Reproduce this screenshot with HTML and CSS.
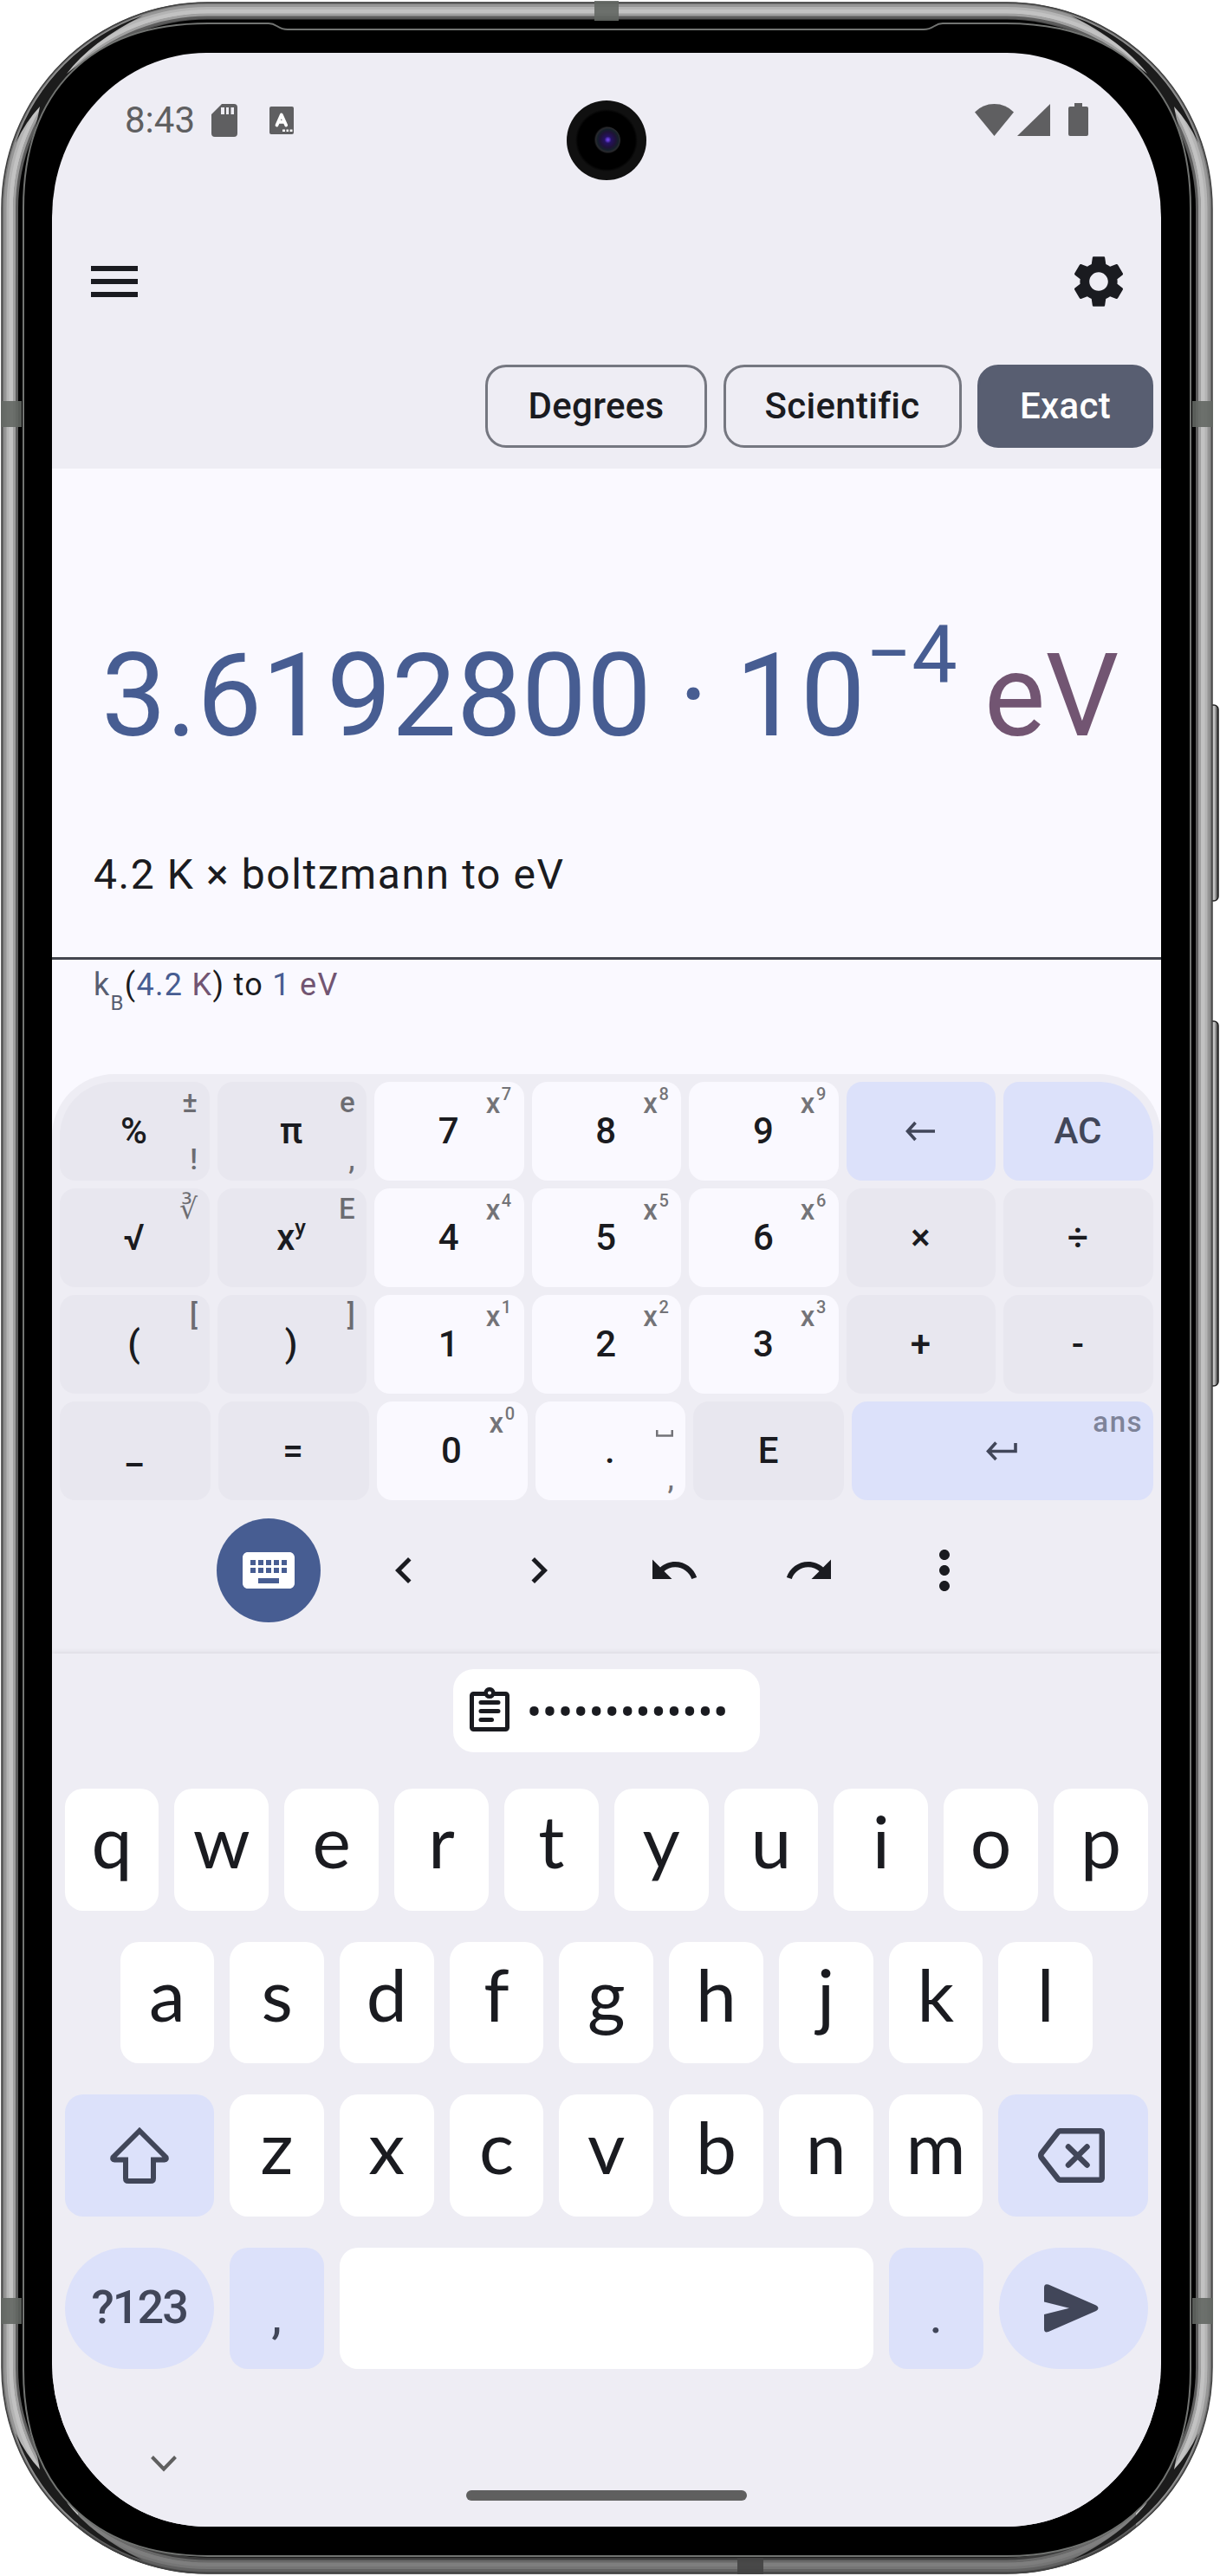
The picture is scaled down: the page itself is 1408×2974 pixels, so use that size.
FILE: index.html
```html
<!DOCTYPE html>
<html lang="en">
<head>
<meta charset="utf-8">
<title>Calculator</title>
<link rel="stylesheet" href="styles.css">
</head>
<body>
<div class="phone">
  <svg class="frame" viewBox="0 0 1408 2974" aria-hidden="true">
    <defs>
      <linearGradient id="btn" x1="0" x2="1" y1="0" y2="0">
        <stop offset="0" stop-color="#444"/><stop offset=".35" stop-color="#ddd"/><stop offset=".65" stop-color="#bbb"/><stop offset="1" stop-color="#222"/>
      </linearGradient>
      <clipPath id="body"><rect x="2" y="2.500" width="1397" height="2969" rx="238"/></clipPath>
    </defs>
    <g fill="url(#btn)" stroke="#222" stroke-width="1.5">
      <rect x="1394" y="814" width="12" height="226" rx="5"/>
      <rect x="1394" y="1179" width="12" height="421" rx="5"/>
    </g>
    <rect x="2" y="2.500" width="1397" height="2969" rx="238" fill="#4a4a4a"/>
    <g fill="none">
      <rect x="4" y="4.500" width="1393" height="2965" rx="236" stroke="#777" stroke-width="3"/>
      <rect x="6.500" y="7" width="1388" height="2960" rx="233" stroke="#969696" stroke-width="4"/>
      <rect x="9.500" y="10" width="1382" height="2954" rx="230" stroke="#b4b4b4" stroke-width="4"/>
      <rect x="13" y="13.500" width="1375" height="2947" rx="227" stroke="#c2c2c2" stroke-width="5"/>
      <rect x="17" y="17.500" width="1367" height="2939" rx="223" stroke="#a0a0a0" stroke-width="4"/>
      <rect x="19.500" y="20" width="1362" height="2934" rx="220" stroke="#5c5c5c" stroke-width="3"/>
    </g>
    <path d="M90 2880H1311V2971H90Z" opacity=".35" clip-path="url(#body)"/>
    <rect x="21" y="22.500" width="1359" height="2930" rx="219" fill="#000"/>
    <!-- shaded corners of the metal band -->
    <g fill="#1c1c1c">
      <path id="corner" d="M18 165A236 236 0 0 1 165 18Q105 48 77 85Q110 58 160 38A216 216 0 0 0 38 160Q44 135 46 123Q30 140 18 165Z"/>
      <use href="#corner" transform="matrix(-1 0 0 1 1401 0)"/>
      <use href="#corner" transform="matrix(1 0 0 -1 0 2974)"/>
      <use href="#corner" transform="matrix(-1 0 0 -1 1401 2974)"/>
    </g>
    <rect x="2" y="3" width="1397" height="2968" rx="238" fill="none" stroke="#404040" stroke-width="1.500"/>
    <path d="M27 240C27 105 105 27 240 27H310C320 27 320 34 332 34H1066C1078 34 1078 27 1088 27H1161C1296 27 1374 105 1374 240V2736C1374 2870 1296 2950 1161 2951H240C105 2950 27 2870 27 2736Z" fill="#000" stroke="#727472" stroke-width="2"/>
    <g fill="#636763" opacity=".9">
      <path d="M686 1H714V24H686ZM1 463H25V493H1ZM1376 463H1400V493H1376ZM1 2653H25V2683H1ZM1376 2653H1400V2683H1376Z"/>
      <path d="M851 2953H881V2972H851Z" fill="#434343"/>
    </g>
  </svg>

  <main class="screen">
    <div class="camera"><i class="lens"></i></div>

    <header class="status">
      <div class="status-left">
        <span>8:43</span>
        <svg class="sd" viewBox="0 0 30 38"><path fill-rule="evenodd" d="M12 0H26Q30 0 30 4V34Q30 38 26 38H4Q0 38 0 34V12ZM11 4V12H15V4ZM17 4V12H20V4ZM22.500 4V12H26V4Z" fill="currentColor"/></svg>
        <svg class="lang" viewBox="0 0 28 32"><rect width="28" height="32" rx="2" fill="currentColor"/><path d="M8.500 21.500L13.800 9.500L19.200 21.500M10.500 17.800H17" fill="none" stroke="#fff" stroke-width="3.800" stroke-linecap="round" stroke-linejoin="round"/><path d="M15 26.500H18V29H15ZM19.500 26.500H22V29H19.500ZM23.500 26.500H26.500V29H23.500Z" fill="#fff"/></svg>
      </div>
      <svg class="signals" viewBox="0 0 132 38" fill="currentColor"><path d="M0 10.500Q9 1 22.500 1T45 10.500L22.500 38Z"/><path d="M49 38L87 1V38Z"/><path d="M115 0H124V4H129Q131 4 131 6V36Q131 38 129 38H110Q108 38 108 36V6Q108 4 110 4H115Z"/></svg>
    </header>

    <nav class="appbar">
      <svg class="ic72" viewBox="0 0 24 24"><path d="M3 18h18v-2H3v2zm0-5h18v-2H3v2zm0-7v2h18V6H3z" fill="currentColor"/></svg>
      <svg class="ic72" viewBox="0 0 24 24"><path d="M19.140 12.940c.04-.3.06-.61.06-.94 0-.32-.02-.64-.07-.94l2.030-1.580c.18-.14.23-.41.12-.61l-1.920-3.320c-.12-.22-.37-.29-.59-.22l-2.390.96c-.5-.38-1.030-.7-1.620-.94l-.36-2.540c-.04-.24-.24-.41-.48-.41h-3.840c-.24 0-.43.17-.47.41l-.36 2.540c-.59.24-1.130.57-1.620.94l-2.390-.96c-.22-.08-.47 0-.59.22L2.740 8.870c-.12.21-.08.47.12.61l2.030 1.580c-.05.3-.09.63-.09.94s.02.64.07.94l-2.030 1.580c-.18.14-.23.41-.12.61l1.920 3.320c.12.22.37.29.59.22l2.390-.96c.5.38 1.030.7 1.620.94l.36 2.540c.05.24.24.41.48.41h3.840c.24 0 .44-.17.47-.41l.36-2.540c.59-.24 1.130-.56 1.620-.94l2.390.96c.22.08.47 0 .59-.22l1.920-3.320c.12-.22.07-.47-.12-.61l-2.010-1.580zM12 15.600c-1.980 0-3.600-1.620-3.600-3.600s1.620-3.600 3.600-3.600 3.600 1.620 3.600 3.600-1.620 3.600-3.600 3.600z" fill="currentColor"/></svg>
    </nav>

    <div class="chips">
      <button class="chip degrees">Degrees</button>
      <button class="chip scientific">Scientific</button>
      <button class="chip exact">Exact</button>
    </div>

    <section class="display">
      <div class="result">3.6192800 · 10<sup>−4</sup> <span class="unit">eV</span></div>
      <div class="expression">4.2 K × boltzmann to eV</div>
      <div class="parsed"><span class="const">k<sub>B</sub></span>(<span class="num">4.2</span> <span class="unit">K</span>) to <span class="num">1</span> <span class="unit">eV</span></div>
    </section>

    <section class="keypad">
      <div class="krow">
        <div class="key op tl">%<span class="hint">±</span><span class="hint low">!</span></div>
        <div class="key op">π<span class="hint">e</span><span class="hint low">,</span></div>
        <div class="key">7<span class="hint pw">x<sup>7</sup></span></div>
        <div class="key">8<span class="hint pw">x<sup>8</sup></span></div>
        <div class="key">9<span class="hint pw">x<sup>9</sup></span></div>
        <div class="key act"><svg class="arrow" viewBox="0 0 36 24"><path d="M35 12H4M12.500 2L3.500 12L12.500 22" /></svg></div>
        <div class="key act tr">AC</div>
      </div>
      <div class="krow">
        <div class="key op">√<span class="hint root">∛</span></div>
        <div class="key op"><span class="pow">x<sup>y</sup></span><span class="hint">E</span></div>
        <div class="key">4<span class="hint pw">x<sup>4</sup></span></div>
        <div class="key">5<span class="hint pw">x<sup>5</sup></span></div>
        <div class="key">6<span class="hint pw">x<sup>6</sup></span></div>
        <div class="key op">×</div>
        <div class="key op">÷</div>
      </div>
      <div class="krow">
        <div class="key op">(<span class="hint">[</span></div>
        <div class="key op">)<span class="hint">]</span></div>
        <div class="key">1<span class="hint pw">x<sup>1</sup></span></div>
        <div class="key">2<span class="hint pw">x<sup>2</sup></span></div>
        <div class="key">3<span class="hint pw">x<sup>3</sup></span></div>
        <div class="key op">+</div>
        <div class="key op">-</div>
      </div>
      <div class="krow last">
        <div class="key op">_</div>
        <div class="key op">=</div>
        <div class="key">0<span class="hint pw">x<sup>0</sup></span></div>
        <div class="key">.<svg class="space" viewBox="0 0 20 8"><path d="M1.250 0V6.500H18.750V0" fill="none" stroke="currentColor" stroke-width="2.500"/></svg><span class="hint low">,</span></div>
        <div class="key op">E</div>
        <div class="key act"><svg class="arrow" viewBox="0 0 36 24"><path d="M34 3V12.500H3M11.500 2.500L2.500 12.500L11.500 22" /></svg><span class="hint ans">ans</span></div>
      </div>
      <div class="tools">
        <span class="tool kb"><svg class="ic72" viewBox="0 0 24 24"><path d="M20 5H4c-1.100 0-1.990.9-1.990 2L2 17c0 1.100.9 2 2 2h16c1.100 0 2-.9 2-2V7c0-1.100-.9-2-2-2zm-9 3h2v2h-2V8zm0 3h2v2h-2v-2zM8 8h2v2H8V8zm0 3h2v2H8v-2zm-1 2H5v-2h2v2zm0-3H5V8h2v2zm9 7H8v-2h8v2zm0-4h-2v-2h2v2zm0-3h-2V8h2v2zm3 3h-2v-2h2v2zm0-3h-2V8h2v2z" fill="currentColor"/></svg></span>
        <span class="tool"><svg class="ic60" viewBox="0 0 24 24"><path d="M15.410 7.410L14 6l-6 6 6 6 1.410-1.410L10.830 12z" fill="currentColor"/></svg></span>
        <span class="tool"><svg class="ic60" viewBox="0 0 24 24"><path d="M10 6L8.590 7.410 13.170 12l-4.580 4.590L10 18l6-6z" fill="currentColor"/></svg></span>
        <span class="tool"><svg class="ic60" viewBox="0 0 24 24"><path d="M12.500 8c-2.650 0-5.050.99-6.900 2.600L2 7v9h9l-3.620-3.620c1.390-1.160 3.160-1.880 5.120-1.880 3.540 0 6.550 2.310 7.600 5.500l2.370-.78C21.080 11.030 17.150 8 12.500 8z" fill="currentColor"/></svg></span>
        <span class="tool"><svg class="ic60" viewBox="0 0 24 24"><path d="M18.400 10.600C16.550 8.990 14.150 8 11.500 8c-4.650 0-8.580 3.030-9.960 7.220L3.900 16c1.050-3.190 4.050-5.500 7.600-5.500 1.950 0 3.730.72 5.120 1.880L13 16h9V7l-3.600 3.600z" fill="currentColor"/></svg></span>
        <span class="tool"><svg class="ic72" viewBox="0 0 24 24"><path d="M12 8c1.100 0 2-.9 2-2s-.9-2-2-2-2 .9-2 2 .9 2 2 2zm0 2c-1.100 0-2 .9-2 2s.9 2 2 2 2-.9 2-2-.9-2-2-2zm0 6c-1.100 0-2 .9-2 2s.9 2 2 2 2-.9 2-2-.9-2-2-2z" fill="currentColor"/></svg></span>
      </div>
    </section>

    <section class="keyboard">
      <div class="suggest">
        <div class="clip">
          <svg class="clipicon" viewBox="0 0 46 51" fill="none" stroke="currentColor"><rect x="2.500" y="7.500" width="41" height="41" rx="2" stroke-width="5"/><path d="M13 17.500H33M13 27.500H33M13 37.500H25.500" stroke-width="5" stroke-linecap="round"/><circle cx="23" cy="6.500" r="4.300" stroke-width="4.500" fill="#fff"/></svg>
          <span class="dots">•••••••••••••</span>
        </div>
      </div>
      <div class="row">
        <div class="let">q</div><div class="let">w</div><div class="let">e</div><div class="let">r</div><div class="let">t</div><div class="let">y</div><div class="let">u</div><div class="let">i</div><div class="let">o</div><div class="let">p</div>
      </div>
      <div class="row mid">
        <div class="let">a</div><div class="let">s</div><div class="let">d</div><div class="let">f</div><div class="let">g</div><div class="let">h</div><div class="let">j</div><div class="let">k</div><div class="let">l</div>
      </div>
      <div class="row">
        <div class="let fn wide"><svg class="shift" viewBox="127 2455 68 65"><path d="M161 2459L130.500 2489.500Q129.500 2492.500 132 2492.500H145V2514Q145 2517 148 2517H174Q177 2517 177 2514V2492.500H190Q192.500 2492.500 191.500 2489.500Z" fill="none" stroke="currentColor" stroke-width="6"/></svg></div>
        <div class="let">z</div><div class="let">x</div><div class="let">c</div><div class="let">v</div><div class="let">b</div><div class="let">n</div><div class="let">m</div>
        <div class="let fn wide"><svg class="del" viewBox="1197 2456 77 63"><g fill="none" stroke="currentColor" stroke-width="6.500" stroke-linejoin="round" stroke-linecap="round"><path d="M1223 2459.200H1268Q1270.800 2459.200 1270.800 2462V2513Q1270.800 2515.800 1268 2515.800H1223Q1221 2515.800 1220 2514.500L1201 2490Q1199.500 2487.500 1201 2485L1220 2460.500Q1221 2459.200 1223 2459.200Z"/><path d="M1232 2477.500L1253.500 2498.500M1253.500 2477.500L1232 2498.500"/></g></svg></div>
      </div>
      <div class="row">
        <div class="let fn wide pill sym">?123</div>
        <div class="let fn punct">,</div>
        <div class="let spacebar"></div>
        <div class="let fn punct">.</div>
        <div class="let fn wide pill"><svg class="send" viewBox="1205 2638 63 56"><path d="M1205 2642Q1205 2637 1210 2638.500L1265 2662.500Q1270 2665.700 1265 2669L1210 2693Q1205 2694.500 1205 2690V2673L1234 2665.700L1205 2658.500Z" fill="currentColor"/></svg></div>
      </div>
      <footer class="sysnav">
        <svg class="hide" viewBox="0 0 30 19"><path d="M1.500 1.500L15 15.500L28.500 1.500" fill="none" stroke="currentColor" stroke-width="4"/></svg>
        <i class="home"></i>
      </footer>
    </section>
  </main>
</div>
</body>
</html>
```
FILE: styles.css
```css
* { box-sizing: border-box; }
body { margin: 0; background: #fff; font-family: Roboto, sans-serif; color: #1a1b20; }
svg { display: block; }
.phone { position: relative; width: 1408px; height: 2974px; padding: 61px 68px 57px 60px; overflow: hidden; }
.frame { position: absolute; left: 0; top: 0; width: 1408px; height: 2974px; }
.screen { position: relative; width: 1280px; height: 2856px; border-radius: 178px / 190px; overflow: hidden; background: #eeedf4; display: flex; flex-direction: column; }
.screen > * { flex: none; }

.camera { position: absolute; left: 594px; top: 55px; width: 92px; height: 92px; border-radius: 50%; background: radial-gradient(circle, #000 0 33px, #101010 36px); display: flex; align-items: center; justify-content: center; }
.lens { width: 32px; height: 32px; border-radius: 50%; background: radial-gradient(circle at 55% 48%, #6a40e0 0 1px, #241260 4px, #1f1238 9px, #15202a 12px, #2a2a2e 14px, #000 16px); }

.status { height: 168px; padding: 58px 83px 0 84px; display: flex; justify-content: space-between; align-items: flex-start; color: #5f5f61; font-size: 42px; line-height: 40px; }
.status-left { display: flex; }
.status-left span { width: 100px; }
.sd { width: 30px; height: 38px; margin: 1px 37px 0 0; }
.lang { width: 28px; height: 32px; margin-top: 4px; }
.signals { width: 132px; height: 38px; }

.appbar { height: 192px; padding: 0 36px; display: flex; align-items: center; justify-content: space-between; }
.ic72 { width: 72px; height: 72px; }
.ic60 { width: 60px; height: 60px; }

.chips { height: 120px; padding: 0 9px 24px; display: flex; justify-content: flex-end; gap: 18.500px; }
.chip { height: 96px; padding: 0; border: 3px solid #757780; border-radius: 24px; background: none; color: inherit; font: 500 42px/90px Roboto, sans-serif; letter-spacing: .3px; }
.degrees { width: 256px; }
.scientific { width: 275px; }
.exact { width: 203px; background: #585e71; border-color: #585e71; color: #fff; }

.display { height: 699px; background: #faf9ff; white-space: nowrap; }
.result { padding: 183px 0 0 57px; height: 342px; font-size: 133.400px; line-height: 160px; word-spacing: -2px; color: #475d92; }
.result sup { font-size: 93.400px; line-height: 0; vertical-align: 62px; }
.unit { color: #725572; }
.expression { height: 225px; padding: 97px 0 0 48px; border-bottom: 3px solid #44464f; font-size: 48px; line-height: 60px; letter-spacing: 1.580px; }
.parsed { padding: 4px 0 0 48px; font-size: 36px; line-height: 50px; letter-spacing: 1.300px; }
.parsed sub { font-size: 24px; line-height: 0; vertical-align: -17px; }
.const { color: #585e71; }
.num { color: #475d92; }

.keypad { height: 669px; padding: 9px 9px 0; border-radius: 72px 72px 0 0; background: #eeedf4; box-shadow: 0 -72px 0 72px #faf9ff; clip-path: inset(0); display: flex; flex-direction: column; gap: 9px; }
.krow { display: grid; grid-template-columns: repeat(7, 1fr); gap: 9px; height: 114px; flex: none; }
.last { grid-template-columns: repeat(5, 173.860px) 1fr; }
.key { position: relative; padding-right: 1.500px; border-radius: 18px; background: #faf9ff; display: flex; align-items: center; justify-content: center; font-size: 42px; font-weight: 500; line-height: 50px; }
.op { background: #e8e7ef; }
.act { background: #dce1fa; color: #414659; }
.tl { border-top-left-radius: 63px; }
.tr { border-top-right-radius: 63px; }
.hint { position: absolute; top: 7px; right: 12px; font-size: 33px; line-height: 33px; letter-spacing: 1.500px; opacity: .6; }
.pw { top: 8px; right: 13px; }
.low { top: auto; bottom: 8px; }
.hint sup { font-size: 20px; line-height: 0; vertical-align: 15px; }
.root { font-family: "DejaVu Sans", sans-serif; font-weight: 400; }
.pow sup { font-size: 26px; line-height: 0; vertical-align: 17px; }
.arrow { width: 36px; height: 24px; fill: none; stroke: currentColor; stroke-width: 3.600px; }
.space { position: absolute; width: 20px; height: 8px; right: 14px; top: 33px; opacity: .6; }
.tools { display: flex; gap: 36px; padding: 12px 0 0 181px; }
.tool { width: 120px; height: 120px; border-radius: 50%; display: flex; align-items: center; justify-content: center; }
.kb { background: #475d92; color: #fff; }

.keyboard { position: relative; height: 1008px; padding: 18px 15px 0 14.500px; background: #eeedf4; box-shadow: 0 -1px 6px rgba(0,0,0,.09); display: flex; flex-direction: column; gap: 36px; }
.keyboard > * { flex: none; }
.suggest { height: 102px; display: flex; justify-content: center; }
.clip { width: 354px; height: 96px; border-radius: 24px; background: #fff; display: flex; align-items: center; padding-left: 19px; }
.clipicon { width: 46px; height: 51px; margin-bottom: 3px; }
.dots { margin-left: 20px; padding-top: 6px; font-size: 52px; line-height: 50px; letter-spacing: .400px; white-space: nowrap; }
.row { height: 140.600px; display: flex; gap: 18px; }
.mid { padding: 0 64px; }
.let { flex: 1 1 0; border-radius: 21px; background: #fff; display: flex; align-items: center; justify-content: center; padding-bottom: 20px; font-family: Lato, sans-serif; font-size: 84px; line-height: 100px; }
.fn { background: #dce1fa; color: #414659; }
.wide { flex: 0 0 172.500px; padding: 0; }
.pill { border-radius: 71px; }
.sym { font: 500 54px/60px Roboto, sans-serif; padding-bottom: 2px; letter-spacing: -2px; }
.punct { flex: 0 0 108.500px; font-family: Roboto, sans-serif; font-size: 60px; padding: 16px 0 0; }
.shift { width: 68px; height: 65px; }
.del { width: 77px; height: 63px; margin-right: 4px; }
.send { width: 63px; height: 56px; margin-right: 5px; }
.sysnav { height: 60px; margin-top: 64px; display: grid; grid-template-columns: 1fr 324px 1fr; color: #5f5f5f; }
.hide { width: 30px; height: 19px; margin-left: 99px; }
.home { width: 324px; height: 12px; margin-top: 40px; border-radius: 6px; background: #5f5f5f; }
```
